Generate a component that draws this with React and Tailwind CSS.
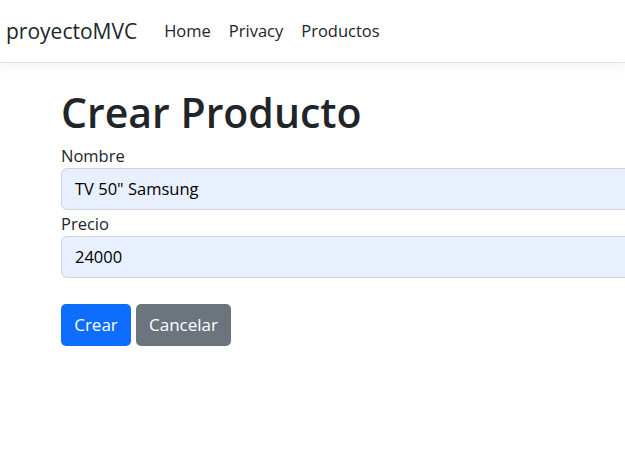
export default function App() {
  const font = { fontFamily: "'Open Sans', 'Noto Sans', sans-serif" };
  return (
    <div className="min-h-[467px] w-[625px] overflow-hidden bg-white text-[#212529]" style={font}>
      {/* Navbar */}
      <nav className="flex h-[63px] items-center border-b border-[#dee2e6] bg-white pl-[6px] shadow-[0_4px_10px_rgba(0,0,0,0.05)]">
        <span className="mr-[27px] text-[21px] leading-none">proyectoMVC</span>
        <div className="flex gap-[18px] text-[16.5px] leading-none">
          <span>Home</span>
          <span>Privacy</span>
          <span>Productos</span>
        </div>
      </nav>

      <main className="pl-[61px] pt-[23px]">
        <h1 className="text-[41px] font-semibold leading-[52px]">Crear Producto</h1>
        <form className="mt-[6px]">
          <label className="block text-[16.5px] leading-[24px]">Nombre</label>
          <div className="flex h-[42px] w-[600px] items-center rounded-[6px] border border-[#ced4da] bg-[#e8f0fe] px-[13px] text-[16.5px] text-black">
            TV 50" Samsung
          </div>
          <label className="mt-[2px] block text-[16.5px] leading-[24px]">Precio</label>
          <div className="flex h-[42px] w-[600px] items-center rounded-[6px] border border-[#ced4da] bg-[#e8f0fe] px-[13px] text-[16.5px] text-black">
            24000
          </div>
          <div className="mt-[26px] flex gap-[5px]">
            <button type="button" className="h-[42px] w-[70px] rounded-[5px] bg-[#0d6efd] text-[17px] text-white">
              Crear
            </button>
            <button type="button" className="h-[42px] w-[95px] rounded-[5px] bg-[#6c757d] text-[17px] text-white">
              Cancelar
            </button>
          </div>
        </form>
      </main>
    </div>
  );
}
